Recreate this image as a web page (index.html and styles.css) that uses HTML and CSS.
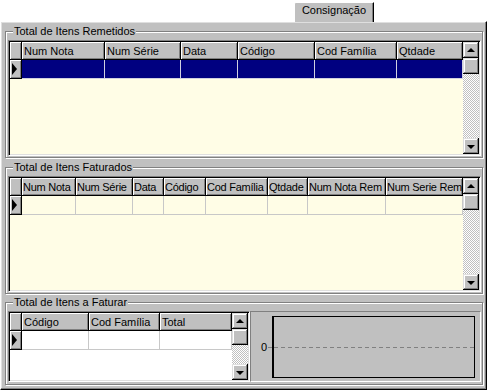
FILE: index.html
```html
<!DOCTYPE html>
<html>
<head>
<meta charset="utf-8">
<link rel="stylesheet" href="styles.css">
</head>
<body>
<div class="tabstrip"><div class="tab">Consignação</div></div>
<div class="page">
  <fieldset class="group g1">
    <legend>Total de Itens Remetidos</legend>
    <div class="grid">
      <div class="cells cream c1">
        <div class="hd"></div><div class="hd">Num Nota</div><div class="hd">Num Série</div><div class="hd">Data</div><div class="hd">Código</div><div class="hd">Cod Família</div><div class="hd">Qtdade</div>
        <div class="hd ind"><span class="tri"></span></div><div class="cell sel"></div><div class="cell sel"></div><div class="cell sel"></div><div class="cell sel"></div><div class="cell sel"></div><div class="cell sel"></div>
      </div>
      <div class="vscroll"><div class="sbtn up"></div><div class="sbtn"></div><div class="track"></div><div class="sbtn down"></div></div>
    </div>
  </fieldset>
  <fieldset class="group g2">
    <legend>Total de Itens Faturados</legend>
    <div class="grid">
      <div class="cells cream c2">
        <div class="hd"></div><div class="hd">Num Nota</div><div class="hd">Num Série</div><div class="hd">Data</div><div class="hd">Código</div><div class="hd">Cod Família</div><div class="hd">Qtdade</div><div class="hd">Num Nota Rem</div><div class="hd">Num Serie Rem</div>
        <div class="hd ind"><span class="tri"></span></div><div class="cell"></div><div class="cell"></div><div class="cell"></div><div class="cell"></div><div class="cell"></div><div class="cell"></div><div class="cell"></div><div class="cell"></div>
      </div>
      <div class="vscroll"><div class="sbtn up"></div><div class="sbtn"></div><div class="track"></div><div class="sbtn down"></div></div>
    </div>
  </fieldset>
  <fieldset class="group g3">
    <legend>Total de Itens a Faturar</legend>
    <div class="row">
      <div class="grid small">
        <div class="cells white c3">
          <div class="hd"></div><div class="hd">Código</div><div class="hd">Cod Família</div><div class="hd">Total</div>
          <div class="hd ind"><span class="tri"></span></div><div class="cell"></div><div class="cell"></div><div class="cell"></div>
        </div>
        <div class="vscroll"><div class="sbtn up"></div><div class="sbtn"></div><div class="track"></div><div class="sbtn down"></div></div>
      </div>
      <div class="chart">
        <span class="zero">0</span>
        <span class="tick"></span>
        <div class="plot"><div class="zline"></div></div>
      </div>
    </div>
  </fieldset>
</div>
</body>
</html>
```

FILE: styles.css
```css
* { box-sizing: border-box; }
html, body { margin: 0; background: #fff; }
body {
  font: 11px/13px "Liberation Sans", Arial, sans-serif;
  color: #000;
  width: 489px;
  height: 390px;
  overflow: hidden;
}
.tabstrip {
  height: 21px;
  padding: 2px 0 0 294px;
}
.tab {
  position: relative;
  z-index: 1;
  width: 80px;
  height: 20px;
  background: #c0c0c0;
  border-top: 1px solid #fff;
  border-left: 1px solid #fff;
  border-right: 1px solid #000;
  border-top-left-radius: 2px;
  box-shadow: inset -1px 0 #808080;
  text-align: center;
  padding-top: 1px;
}
.page {
  width: 487px;
  height: 369px;
  background: #c0c0c0;
  border-top: 1px solid #fff;
  border-left: 1px solid #fff;
  border-right: 1px solid #000;
  border-bottom: 1px solid #000;
  box-shadow: inset -1px -1px #808080, inset 1px 1px #dfdfdf;
  padding: 3px 3px 0 4px;
  display: flex;
  flex-direction: column;
}
.group {
  margin: 0;
  min-width: 0;
  border: 1px solid #808080;
  box-shadow: inset 1px 1px #fff, 1px 1px #fff;
  padding: 2px 1px 1px 2px;
}
.group legend {
  padding: 0 1px;
  margin-left: 5px;
  line-height: 13px;
  background: #c0c0c0;
}
.g2 { margin-top: 3px; }
.g3 { margin-top: 2px; padding-bottom: 2px; }

.grid {
  display: flex;
  border: 1px solid;
  border-color: #808080 #fff #fff #808080;
  box-shadow: inset 1px 1px #000, inset -1px -1px #dfdfdf;
  padding: 1px;
  height: 116px;
}
.grid.small { width: 242px; height: 71px; flex: none; }

.cells {
  flex: 1;
  min-width: 0;
  display: grid;
  grid-template-rows: 18px 19px;
  align-content: start;
}
.cream { background: #fffde6; }
.white { background: #fff; }
.c1 { grid-template-columns: 12px 83px 76px 57px 77px 82px 1fr; }
.c2 { grid-template-columns: 12px 54px 57px 31px 42px 62px 40px 78px 1fr; }
.c3 { grid-template-columns: 12px 67px 71px 1fr; }

.hd {
  background: #c0c0c0;
  border-right: 1px solid #000;
  border-bottom: 1px solid #000;
  box-shadow: inset 1px 1px #fff, inset -1px -1px #808080;
  padding: 3px 0 0 2px;
  white-space: nowrap;
  overflow: hidden;
}
.c2 .hd {
  padding-left: 1px;
  letter-spacing: -0.25px;
}
.ind, .c2 .ind {
  display: flex;
  align-items: center;
  padding: 0 0 0 2px;
}
.tri {
  width: 0;
  height: 0;
  border-left: 5px solid #000;
  border-top: 6px solid transparent;
  border-bottom: 6px solid transparent;
}
.cell {
  border-right: 1px solid #c8c8c8;
  border-bottom: 1px solid #c8c8c8;
}
.cell.sel {
  background: #000080;
  border-color: #d0d0e0;
}

.vscroll {
  width: 16px;
  flex: none;
  display: flex;
  flex-direction: column;
  background: repeating-conic-gradient(#c0c0c0 0 25%, #fff 0 50%) 0 0 / 2px 2px;
}
.sbtn {
  height: 16px;
  flex: none;
  background: #c0c0c0;
  box-shadow: inset -1px -1px #000, inset 1px 1px #dfdfdf, inset -2px -2px #808080, inset 2px 2px #fff;
  display: flex;
  align-items: center;
  justify-content: center;
}
.track { flex: 1; }
.up::after, .down::after {
  content: "";
  width: 0;
  height: 0;
  border-left: 4px solid transparent;
  border-right: 4px solid transparent;
}
.up::after { border-bottom: 4px solid #000; margin-top: -1px; }
.down::after { border-top: 4px solid #000; margin-top: 1px; }

.row { display: flex; }
.chart {
  flex: 1;
  border: 1px solid;
  border-color: #808080 #fff #fff #808080;
  display: flex;
  align-items: center;
  padding: 4px 5px 3px 10px;
}
.zero { width: 7px; }
.tick {
  width: 4px;
  height: 1px;
  background: repeating-linear-gradient(90deg, #808080 0 4px, transparent 4px 7px);
}
.plot {
  flex: 1;
  height: 62px;
  border: 1px solid #000;
  border-left-width: 2px;
  display: flex;
  align-items: center;
}
.zline {
  flex: 1;
  height: 1px;
  background: repeating-linear-gradient(90deg, #808080 0 4px, transparent 4px 7px);
}
```
